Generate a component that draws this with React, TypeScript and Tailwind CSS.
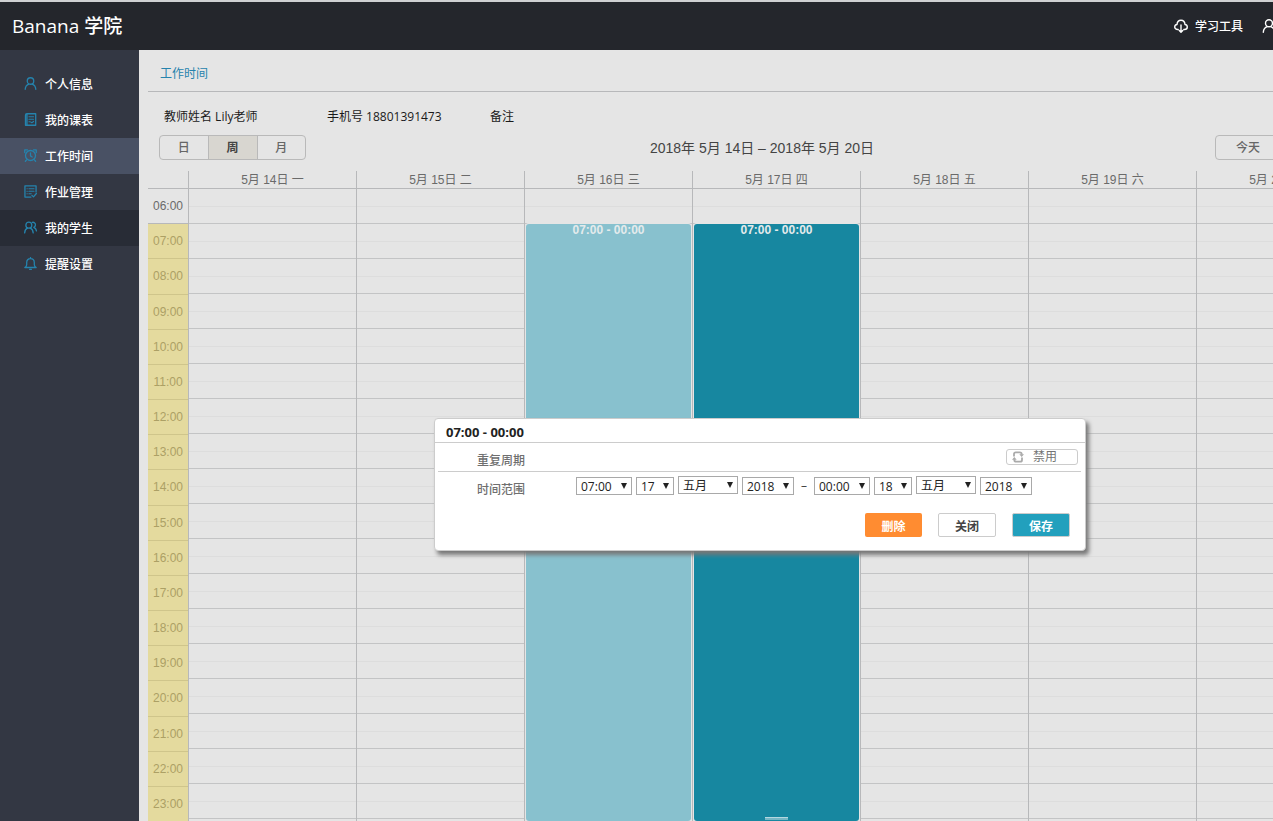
import React, { type ReactNode } from "react";

const uiFont = "font-['Open_Sans','Noto_Sans_CJK_SC',sans-serif]";
const calendarFont = "font-['Liberation_Sans','Noto_Sans_CJK_SC',sans-serif]";

function Icon({ children, className }: { children: ReactNode; className: string }) {
  return (
    <svg
      viewBox="0 0 14 14"
      fill="none"
      stroke="currentColor"
      strokeWidth="1.4"
      strokeLinecap="round"
      strokeLinejoin="round"
      className={`shrink-0 ${className}`}
      aria-hidden="true"
    >
      {children}
    </svg>
  );
}

const personShape = (
  <>
    <circle cx="7" cy="4.3" r="3.5" />
    <path d="M1.3 13.2c.2-3 2-5 4-5.6M12.7 13.2c-.2-3-2-5-4-5.6" />
  </>
);

const menu = [
  { label: "个人信息", tone: "", icon: personShape },
  {
    label: "我的课表",
    tone: "",
    icon: (
      <>
        <path d="M3 .8h9.600v12.400H1.600V2.500C1.600 1.500 2 .8 3 .8zM3.200 1v12" />
        <path d="M5.300 4h5M5.300 6.700h5M5.300 9.400h1.200M7.400 9.800l1 .7 1.900-1.400" strokeWidth="1.2" />
      </>
    ),
  },
  {
    label: "工作时间",
    tone: "bg-[#495164]",
    icon: (
      <>
        <circle cx="7" cy="7" r="5.4" />
        <path d="M7 4.200v3.200l1.800 1.200M.8 3.800V1h2.900M13.200 3.800V1h-2.900M2.800 11.700l-1.300 1.500M11.200 11.700l1.300 1.500" />
      </>
    ),
  },
  {
    label: "作业管理",
    tone: "",
    icon: (
      <>
        <path d="M13 7.500V1H1v12h6.500M8.600 11.200l1.600 1.600 3.100-3.600" />
        <path d="M3.200 4h.3M5.300 4h5.500M3.200 6.700h.3M5.300 6.700h5.500M3.200 9.400h.3M5.300 9.400h2.500" strokeWidth="1.2" />
      </>
    ),
  },
  {
    label: "我的学生",
    tone: "bg-[#282c36]",
    icon: (
      <>
        <circle cx="5.2" cy="4.5" r="3.2" />
        <path d="M.7 12.800c.2-2.700 1.300-4.500 3-5.100M9.900 12.800c-.2-2.700-1.500-4.500-3.200-5.100M9 1.400c2-.3 3.500 1 3.300 3-.1 1.200-.8 2-1.800 2.400 1.800.7 2.700 2 2.900 3.800" />
      </>
    ),
  },
  {
    label: "提醒设置",
    tone: "",
    icon: (
      <path d="M.9 11.300h12.200c-1.300-.8-2-1.800-2-3V6c0-2.500-1.600-4.300-4.100-4.300S2.900 3.500 2.900 6v2.300c0 1.200-.7 2.200-2 3zM7 .6v1M6 13.300h2" />
    ),
  },
];

const days = [
  "5月 14日 一",
  "5月 15日 二",
  "5月 16日 三",
  "5月 17日 四",
  "5月 18日 五",
  "5月 19日 六",
  "5月 20日 日",
];
const hours = Array.from({ length: 18 }, (_, i) => `${String(i + 6).padStart(2, "0")}:00`);
const events: Record<number, string> = {
  2: "bg-[#88c1ce]",
  3: "bg-[#1787a0]",
};

function Header() {
  return (
    <header className="flex h-[50px] shrink-0 items-center justify-between overflow-hidden border-t-2 border-[#cfd0d2] bg-[#24262c] pl-3 text-white">
      <h1 className="text-[19px] font-medium">Banana 学院</h1>
      <nav className="flex shrink-0 items-center text-xs">
        <a href="#tools" className="flex items-center gap-[7px]">
          <Icon className="size-[14px]">
            <path d="M4.200 10.500H3.600C2 10.500.7 9.500.7 8c0-1.400 1-2.400 2.300-2.500C3.200 2.800 4.800 1.300 7 1.300s3.800 1.500 4 4.200c1.300.1 2.300 1.100 2.300 2.500 0 1.500-1.300 2.500-2.900 2.500h-.6M7 6v7M5.300 11.400 7 13.200l1.700-1.800" />
          </Icon>
          <span className="pt-0.5 font-medium">学习工具</span>
        </a>
        <a href="#account" aria-label="账户" className="-mr-[3px] ml-[19px]">
          <Icon className="size-[14px]">{personShape}</Icon>
        </a>
      </nav>
    </header>
  );
}

function Sidebar() {
  return (
    <nav className="w-[139px] shrink-0 bg-[#333743] pt-4">
      <ul>
        {menu.map((item) => (
          <li key={item.label}>
            <a
              href="#menu"
              className={`flex h-9 items-center gap-2 pb-0.5 pl-6 text-xs font-medium text-white ${item.tone}`}
            >
              <Icon className="size-[13px] text-[#2583ad]">{item.icon}</Icon>
              <span className="pt-1">{item.label}</span>
            </a>
          </li>
        ))}
      </ul>
    </nav>
  );
}

function Toolbar() {
  return (
    <div className="grid h-[25px] grid-cols-3 items-center pl-[11px] text-[#666]">
      <div className="flex h-[25px] w-[147px] overflow-hidden rounded border border-[#b9b9b9] text-xs font-medium">
        <button type="button" className="flex-1">日</button>
        <button type="button" className="w-[50px] border-x border-[#b9b9b9] bg-[#d8d6d0] font-bold text-[#444]">
          周
        </button>
        <button type="button" className="flex-1">月</button>
      </div>
      <h2 className="text-center text-sm whitespace-nowrap text-[#444]">2018年 5月 14日 – 2018年 5月 20日</h2>
      <div className="flex justify-end text-xs font-medium">
        <button type="button" className="h-[25px] w-[66px] rounded-l border border-[#b9b9b9]">
          今天
        </button>
        <button type="button" aria-label="上一周" className="flex h-[25px] w-10 items-center justify-center border-y border-[#b9b9b9]">
          <Icon className="size-3"><path d="M9 2 4 7l5 5" /></Icon>
        </button>
        <button type="button" aria-label="下一周" className="flex h-[25px] w-11 items-center justify-center rounded-r border border-[#b9b9b9]">
          <Icon className="size-3"><path d="m5 2 5 5-5 5" /></Icon>
        </button>
      </div>
    </div>
  );
}

function Calendar() {
  return (
    <div className="mt-[11px] flex text-xs text-[#6a6a6a]">
      <div className="w-[41px] shrink-0 border-r border-[#b7b8ba]">
        <div className="h-[18px] border-b border-[#b7b8ba]" />
        <div className="flex h-[633px] flex-col">
          {hours.map((hour, i) => (
            <div
              key={hour}
              className={`flex flex-1 items-center justify-center border-b ${
                i === 0 ? "border-[#b7b8ba]" : "border-[#cfc58b] bg-[#e4da9e] text-[#aca065]"
              }`}
            >
              {hour}
            </div>
          ))}
        </div>
      </div>
      {days.map((day, d) => (
        <section key={day} className="min-w-0 flex-1 border-r border-[#b7b8ba]">
          <h3 className="flex h-[18px] items-center justify-center border-b border-[#b7b8ba]">{day}</h3>
          <div className="relative">
            {hours.map((hour) => (
              <div key={hour} className="h-[35px] border-b border-[#c3c4c5]">
                <div className="h-[18px] border-b border-[#dddddd]" />
              </div>
            ))}
            {events[d] && (
              <div
                className={`absolute top-[35px] right-px bottom-[-2px] left-px flex flex-col items-center justify-between rounded-[3px] font-bold text-[#e4ebec] ring-1 ring-[#e5e5e5] ${events[d]}`}
              >
                <span className="leading-3">07:00 - 00:00</span>
                {d === 3 && <span className="mb-px h-[3px] w-[23px] border-t border-[#b5d8e0] bg-[#74b6c5]" />}
              </div>
            )}
          </div>
        </section>
      ))}
    </div>
  );
}

function Picker({ label, value, size, raised }: { label: string; value: string; size: string; raised?: boolean }) {
  return (
    <span className={`relative block ${size} ${raised ? "pb-px" : "pt-px"}`}>
      <select
        aria-label={label}
        defaultValue={value}
        className="block h-[18px] w-full appearance-none rounded-none border border-[#a9a9a9] bg-white pt-px pl-1 text-xs leading-4 text-[#222]"
      >
        <option>{value}</option>
      </select>
      <svg
        viewBox="0 0 6 6"
        className={`pointer-events-none absolute right-[5px] size-[6px] text-[#222] ${raised ? "top-[6px]" : "top-[7px]"}`}
      >
        <path d="M0 0h6L3 6z" fill="currentColor" />
      </svg>
    </span>
  );
}

function EventDialog() {
  return (
    <section
      role="dialog"
      aria-label="07:00 - 00:00"
      className="absolute top-[368px] left-[295px] w-[652px] rounded border border-[#ccc] bg-white text-xs shadow-[3px_4px_4px_#777777]"
    >
      <h2 className="flex h-6 items-center border-b border-[#ccc] pt-1 pl-[11px] text-[13px] font-bold text-[#222]">
        07:00 - 00:00
      </h2>
      <div className="mr-1 ml-[3px] flex h-[29px] items-center justify-between border-b border-[#ccc] pl-[39px]">
        <span className="pt-2 font-medium text-[#6f6f6f]">重复周期</span>
        <button
          type="button"
          className="mr-[3px] flex h-4 w-[72px] items-center gap-[9px] rounded-[3px] border border-[#ccc] pl-[5px] text-[#747474]"
        >
          <svg viewBox="0 0 12 12" className="size-3 text-[#aaa]" fill="none" stroke="currentColor" strokeWidth="1.8">
            <path d="M2 5.500V3c0-1 .6-1.700 1.700-1.700h4c1.200 0 2 .7 2 1.700v.8M10 6.500V9c0 1-.6 1.700-1.700 1.700h-4c-1.200 0-2-.7-2-1.700v-.8" />
            <path d="M7.300 3.200H12L9.700 6zM0 8.800h4.700L2.300 6z" fill="currentColor" stroke="none" />
          </svg>
          禁用
        </button>
      </div>
      <div className="flex items-start pt-1 pl-[42px]">
        <span className="w-[99px] pt-1.5 font-medium text-[#6f6f6f]">时间范围</span>
        <div className="flex items-center gap-1">
          <Picker label="开始时间" value="07:00" size="w-14" />
          <Picker label="开始日" value="17" size="w-[38px]" />
          <Picker label="开始月" value="五月" size="w-[60px]" raised />
          <Picker label="开始年" value="2018" size="w-[52px]" />
          <span className="w-3 text-center text-[#444]">–</span>
          <Picker label="结束时间" value="00:00" size="w-14" />
          <Picker label="结束日" value="18" size="w-[38px]" />
          <Picker label="结束月" value="五月" size="w-[60px]" raised />
          <Picker label="结束年" value="2018" size="w-[52px]" />
        </div>
      </div>
      <div className="flex justify-end gap-4 pt-[15px] pr-[15px] pb-[13px] font-bold">
        <button type="button" className="h-6 w-[57px] rounded-xs bg-[#ff8c31] pt-1 text-white">删除</button>
        <button type="button" className="h-6 w-[58px] rounded-xs border border-[#ccc] bg-white pt-1 text-[#444]">关闭</button>
        <button type="button" className="h-6 w-[58px] rounded-xs border border-[#ccc] bg-[#22a0bd] pt-1 text-white">保存</button>
      </div>
    </section>
  );
}

export default function App() {
  return (
    <div className={`flex h-screen flex-col overflow-hidden bg-[#e5e5e5] ${uiFont}`}>
      <Header />
      <div className="flex min-h-0 flex-1">
        <Sidebar />
        <main className="relative min-w-0 flex-1 overflow-hidden">
          <div className="min-w-[1226px] pl-[9px]">
            <h2 className="flex h-[42px] items-center border-b border-[#b7b8ba] pt-1.5 pl-3 text-xs text-[#2583ad]">
              工作时间
            </h2>
            <div className="flex h-[43px] items-center pt-1.5 pl-4 text-xs text-[#1a1a1a]">
              <span className="w-[163px]">教师姓名 Lily老师</span>
              <span className="w-[163px]">手机号 18801391473</span>
              <span>备注</span>
            </div>
            <div className={calendarFont}>
              <Toolbar />
              <Calendar />
            </div>
          </div>
          <EventDialog />
        </main>
      </div>
    </div>
  );
}
